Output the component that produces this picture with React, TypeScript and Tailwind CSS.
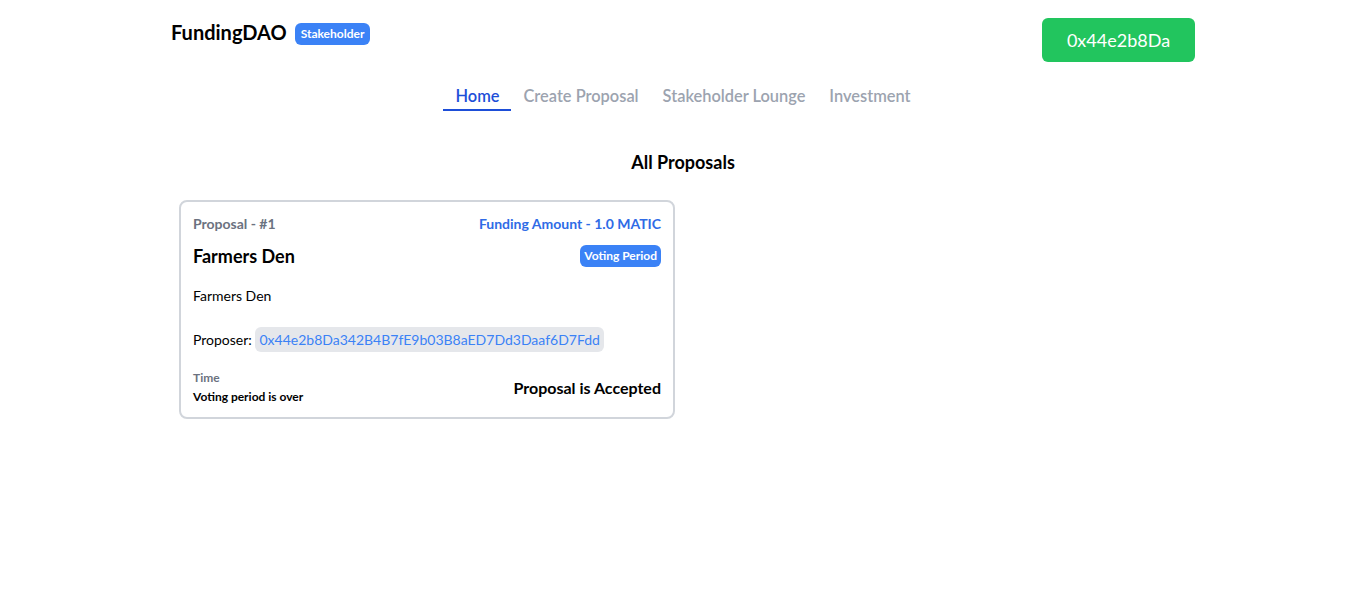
export default function App() {
  const addr = "0x44e2b8Da342B4B7fE9b03B8aED7Dd3Daaf6D7Fdd";
  return (
    <div className="min-h-screen bg-white font-['Lato',sans-serif] text-black">
      <div className="mx-auto max-w-5xl">
        <header className="flex items-start justify-between pt-[18px]">
          <div className="flex items-center gap-2">
            <span className="text-xl font-bold leading-7">FundingDAO</span>
            <span className="mt-[3px] rounded-md bg-[#3b82f6] px-[6px] py-[3px] text-xs font-bold leading-4 text-white">Stakeholder</span>
          </div>
          <button className="h-[44px] w-[153px] rounded-md bg-[#22c55e] text-lg text-white">{addr.slice(0, 10)}</button>
        </header>
        <nav className="mt-[22px] flex justify-center text-[16.4px] font-semibold">
          <span className="border-b-2 border-[#1d4ed8] px-3 pb-[1px] leading-6 text-[#1d4ed8]">Home</span>
          <span className="px-3 pb-[1px] leading-6 text-[#9ca3af]">Create Proposal</span>
          <span className="px-3 pb-[1px] leading-6 text-[#9ca3af]">Stakeholder Lounge</span>
          <span className="px-3 pb-[1px] leading-6 text-[#9ca3af]">Investment</span>
        </nav>
        <h2 className="mt-[37px] text-center text-lg font-bold leading-7">All Proposals</h2>
        <div className="grid grid-cols-2 gap-4 px-2 pt-6">
          <div className="rounded-lg border-2 border-[#d1d5db] p-3">
            <div className="flex justify-between text-sm font-bold leading-5">
              <span className="text-[#6b7280]">Proposal - #1</span>
              <span className="text-[#2f6be6]">Funding Amount - 1.0 MATIC</span>
            </div>
            <div className="mt-2 flex items-center justify-between">
              <span className="text-lg font-bold leading-7">Farmers Den</span>
              <span className="rounded-md bg-[#3b82f6] px-1 py-[3px] text-xs font-bold leading-4 text-white">Voting Period</span>
            </div>
            <p className="mt-4 text-sm leading-5">Farmers Den</p>
            <p className="mt-6 text-sm leading-5">
              Proposer:{" "}
              <span className="rounded-md bg-[#e5e7eb] px-1 py-[4px] text-[#3b82f6]">{addr}</span>
            </p>
            <div className="mt-5 flex items-center justify-between">
              <div className="text-xs font-bold leading-4">
                <div className="text-[#6b7280]">Time</div>
                <div className="mt-[3px]">Voting period is over</div>
              </div>
              <span className="text-base font-bold">Proposal is Accepted</span>
            </div>
          </div>
        </div>
      </div>
    </div>
  );
}
